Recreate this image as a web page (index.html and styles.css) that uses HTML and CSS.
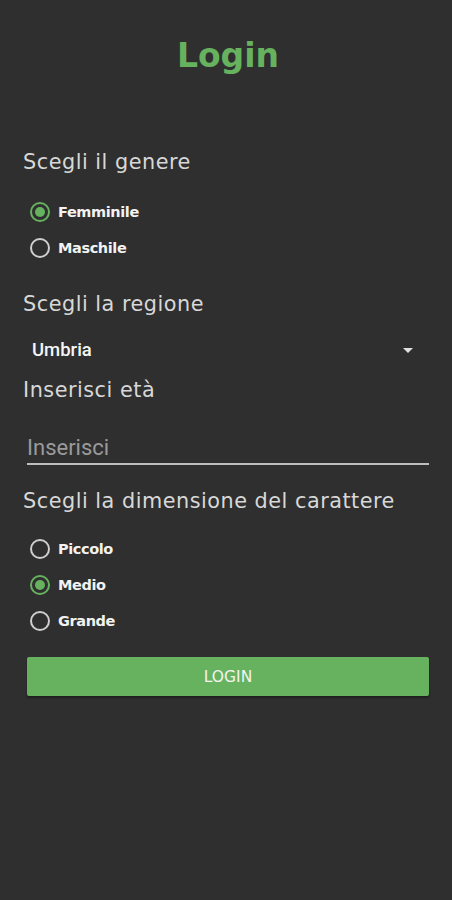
FILE: index.html
```html
<!DOCTYPE html>
<html lang="it">
<head>
  <meta charset="UTF-8" />
  <meta name="viewport" content="width=device-width, initial-scale=1.0" />
  <title>Login</title>
  <link rel="stylesheet" href="styles.css">
</head>
<body>
  <main class="screen">
    <h1 class="title">Login</h1>

    <section class="group">
      <h2 class="label">Scegli il genere</h2>
      <div class="radios">
        <label class="radio"><span class="dot checked"></span>Femminile</label>
        <label class="radio"><span class="dot"></span>Maschile</label>
      </div>
    </section>

    <section class="group">
      <h2 class="label">Scegli la regione</h2>
      <div class="select">
        <span>Umbria</span>
        <svg class="caret" width="10" height="5" viewBox="0 0 10 5"><path d="M0 0h10L5 5z" fill="#e0e0e0"/></svg>
      </div>
      <h2 class="label label-tight">Inserisci età</h2>
      <div class="input">Inserisci</div>
    </section>

    <section class="group">
      <h2 class="label">Scegli la dimensione del carattere</h2>
      <div class="radios">
        <label class="radio"><span class="dot"></span>Piccolo</label>
        <label class="radio"><span class="dot checked"></span>Medio</label>
        <label class="radio"><span class="dot"></span>Grande</label>
      </div>
    </section>

    <button class="login-btn">LOGIN</button>
  </main>
</body>
</html>
```

FILE: styles.css
```css
:root {
  --bg: #2f2f2f;
  --green: #66b25f;
  --text: #e6e6e6;
  --muted: #9a9a9a;
}

html, body {
  margin: 0;
  height: 100%;
  background: var(--bg);
}

body {
  font-family: "DejaVu Sans", "Noto Sans", sans-serif;
  color: var(--text);
}

.screen {
  padding: 34px 23px 0 23px;
  display: flex;
  flex-direction: column;
}

.title {
  margin: 0;
  text-align: center;
  color: var(--green);
  font-size: 33px;
  font-weight: 700;
  line-height: 44px;
  padding-left: 4px;
}

.group {
  display: flex;
  flex-direction: column;
}

.label {
  margin: 0;
  font-size: 20.8px;
  font-weight: 400;
  line-height: 28px;
  color: #d8d8d8;
  letter-spacing: 0.5px;
}

.group:nth-of-type(1) .label { margin-top: 70px; }

.radios {
  display: flex;
  flex-direction: column;
  gap: 14px;
  padding: 25px 0 0 7px;
}

.radio {
  display: flex;
  align-items: center;
  gap: 8px;
  font-size: 14.5px;
  font-weight: 700;
  color: #f2f2f2;
  height: 22px;
  letter-spacing: -0.4px;
}

.dot {
  width: 16px;
  height: 16px;
  border: 2px solid #cfcfcf;
  border-radius: 50%;
  display: flex;
  align-items: center;
  justify-content: center;
}

.dot.checked {
  border-color: var(--green);
}

.dot.checked::after {
  content: "";
  width: 10px;
  height: 10px;
  border-radius: 50%;
  background: var(--green);
}

.group:nth-of-type(2) .label:first-child { margin-top: 31px; }

.select {
  display: flex;
  align-items: center;
  justify-content: space-between;
  margin-top: 18px;
  padding: 0 16px 0 9px;
  height: 28px;
  font-family: Roboto, "Liberation Sans", sans-serif;
  font-weight: 500;
  font-size: 18.5px;
  color: #f5f5f5;
}

.label-tight { margin-top: 12px; }

.input {
  margin: 31px 0 0 4px;
  width: 402px;
  padding-bottom: 2px;
  border-bottom: 2px solid #bdbdbd;
  font-family: Roboto, "Liberation Sans", sans-serif;
  font-size: 22px;
  color: var(--muted);
  line-height: 26px;
}

.group:nth-of-type(3) .label { margin-top: 22px; }

.group:nth-of-type(3) .radios { padding-top: 23px; }

.login-btn {
  margin: 25px 0 0 4px;
  width: 402px;
  height: 39px;
  border: none;
  border-radius: 2px;
  background: var(--green);
  color: #f4f4f4;
  font-family: "DejaVu Sans", sans-serif;
  font-size: 15.5px;
  font-weight: 400;
  box-shadow: 0 2px 2px rgba(0, 0, 0, 0.35);
}
```
